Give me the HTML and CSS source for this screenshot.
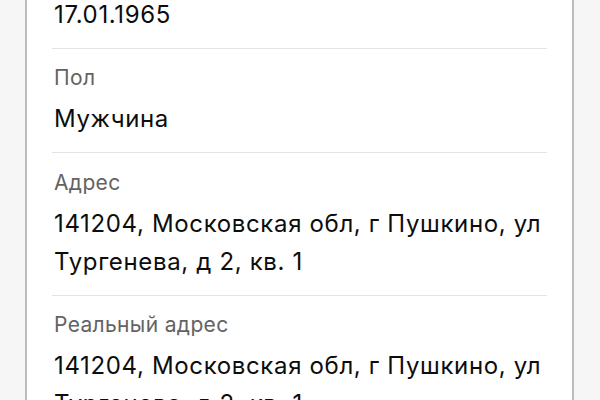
FILE: index.html
```html
<!DOCTYPE html>
<html lang="ru">
<head>
<meta charset="utf-8">
<link rel="stylesheet" href="styles.css">
</head>
<body>
<div class="sheet">
  <div class="list">
    <div class="field">
      <div class="label">Дата рождения</div>
      <div class="value">17.01.1965</div>
    </div>
    <div class="field">
      <div class="label">Пол</div>
      <div class="value">Мужчина</div>
    </div>
    <div class="field">
      <div class="label">Адрес</div>
      <div class="value">141204, Московская обл, г Пушкино, ул Тургенева, д 2, кв. 1</div>
    </div>
    <div class="field">
      <div class="label">Реальный адрес</div>
      <div class="value">141204, Московская обл, г Пушкино, ул Тургенева, д 2, кв. 1</div>
    </div>
  </div>
</div>
</body>
</html>
```

FILE: styles.css
```css
html, body {
  margin: 0;
  padding: 0;
  height: 100%;
  overflow: hidden;
}
body {
  background: #f6f6f6;
  font-family: Inter, "Liberation Sans", Arial, sans-serif;
}
.sheet {
  margin-left: 25px;
  width: 549px;
  min-height: 100%;
  box-sizing: border-box;
  background: #ffffff;
  border-left: 2px solid #bcbcbc;
  border-right: 2px solid #bcbcbc;
  padding: 0 25px;
}
.list {
  margin-top: -56px;
}
.field {
  padding: 16.5px 0 14px 2px;
  border-bottom: 1px solid #e4e4e4;
}
.label {
  font-size: 21px;
  line-height: 26px;
  letter-spacing: 0.35px;
  color: #636363;
}
.value {
  margin-top: 9px;
  font-size: 24px;
  line-height: 38px;
  letter-spacing: 0.65px;
  color: #0d0d0d;
}
```
